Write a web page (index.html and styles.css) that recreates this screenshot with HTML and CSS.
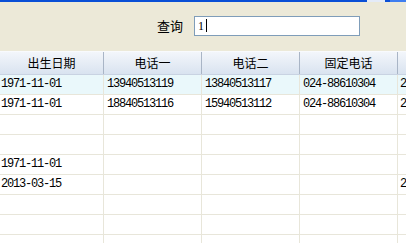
FILE: index.html
```html
<!DOCTYPE html>
<html>
<head>
<meta charset="utf-8">
<link rel="stylesheet" href="styles.css">
</head>
<body>
<div class="titlebar">
  <span class="tb-fill"></span>
  <span class="tb-btn tb-white"></span>
  <span class="tb-gap"></span>
  <span class="tb-btn tb-close"></span>
</div>
<div class="search">
  <span class="search-label">查询</span>
  <div class="search-input"><span class="typed">1</span><span class="caret"></span></div>
</div>
<div class="grid">
  <div class="row head">
    <div class="cell">出生日期</div>
    <div class="cell">电话一</div>
    <div class="cell">电话二</div>
    <div class="cell">固定电话</div>
    <div class="cell"></div>
  </div>
  <div class="row sel">
    <div class="cell">1971-11-01</div>
    <div class="cell">13940513119</div>
    <div class="cell">13840513117</div>
    <div class="cell">024-88610304</div>
    <div class="cell">2</div>
  </div>
  <div class="row">
    <div class="cell">1971-11-01</div>
    <div class="cell">18840513116</div>
    <div class="cell">15940513112</div>
    <div class="cell">024-88610304</div>
    <div class="cell">2</div>
  </div>
  <div class="row">
    <div class="cell"></div><div class="cell"></div><div class="cell"></div><div class="cell"></div><div class="cell"></div>
  </div>
  <div class="row">
    <div class="cell"></div><div class="cell"></div><div class="cell"></div><div class="cell"></div><div class="cell"></div>
  </div>
  <div class="row">
    <div class="cell">1971-11-01</div><div class="cell"></div><div class="cell"></div><div class="cell"></div><div class="cell"></div>
  </div>
  <div class="row">
    <div class="cell">2013-03-15</div><div class="cell"></div><div class="cell"></div><div class="cell"></div><div class="cell">2</div>
  </div>
  <div class="row">
    <div class="cell"></div><div class="cell"></div><div class="cell"></div><div class="cell"></div><div class="cell"></div>
  </div>
  <div class="row">
    <div class="cell"></div><div class="cell"></div><div class="cell"></div><div class="cell"></div><div class="cell"></div>
  </div>
  <div class="row">
    <div class="cell"></div><div class="cell"></div><div class="cell"></div><div class="cell"></div><div class="cell"></div>
  </div>
</div>
</body>
</html>
```
FILE: styles.css
```css
html, body {
  margin: 0;
  padding: 0;
  width: 406px;
  height: 243px;
  overflow: hidden;
  background: #ece9d8;
  font-family: "Noto Sans CJK SC", sans-serif;
}
.titlebar {
  display: flex;
  height: 2px;
  background: #0a4fd6;
}
.tb-fill { flex: 1; }
.tb-btn { height: 2px; }
.tb-white { width: 18px; background: #e4ebf8; }
.tb-gap { width: 5px; }
.tb-close { width: 16px; background: #3f7ef0; }

.search {
  display: flex;
  align-items: center;
  height: 49px;
  padding-left: 157px;
  box-sizing: border-box;
  padding-bottom: 2px;
}
.search-label {
  font-size: 13px;
  line-height: 16px;
  color: #000;
  width: 37px;
}
.search-input {
  display: flex;
  align-items: center;
  width: 161px;
  height: 18px;
  border: 1px solid #7f9db9;
  background: #fff;
  padding-left: 3px;
  box-sizing: content-box;
}
.typed {
  font-family: "Liberation Serif", serif;
  font-size: 12px;
  line-height: 14px;
  color: #000;
}
.caret {
  width: 1px;
  height: 13px;
  background: #000;
  margin-left: 2px;
}

.grid {
  display: flex;
  flex-direction: column;
  width: 406px;
  overflow: hidden;
}
.row {
  display: grid;
  grid-template-columns: 104px 98px 98px 98px 8px;
  height: 20px;
  border-bottom: 1px solid #e8e6da;
  background: #fff;
  box-sizing: border-box;
}
.row .cell {
  border-right: 1px solid #e8e6da;
  font-family: "Liberation Mono", monospace;
  font-size: 12px;
  letter-spacing: -1.2px;
  line-height: 19px;
  padding-left: 3px;
  color: #000;
  white-space: nowrap;
  overflow: hidden;
}
.row .cell:first-child { padding-left: 1px; }
.row .cell:last-child { border-right: 0; padding-left: 2px; }
.row.sel { background: #eaf8fb; }
.row.head {
  height: 24px;
  background: linear-gradient(#f3f6fb, #d9e3f0);
  border-top: 1px solid #f8fafd;
  border-bottom: 1px solid #c9d3e2;
}
.row.head .cell {
  font-family: "Noto Sans CJK SC", sans-serif;
  font-size: 12px;
  letter-spacing: 0;
  line-height: 22px;
  text-align: center;
  padding-left: 0;
  border-right: 1px solid #a9b5c6;
}
.row.head .cell:last-child { border-right: 0; }
```
